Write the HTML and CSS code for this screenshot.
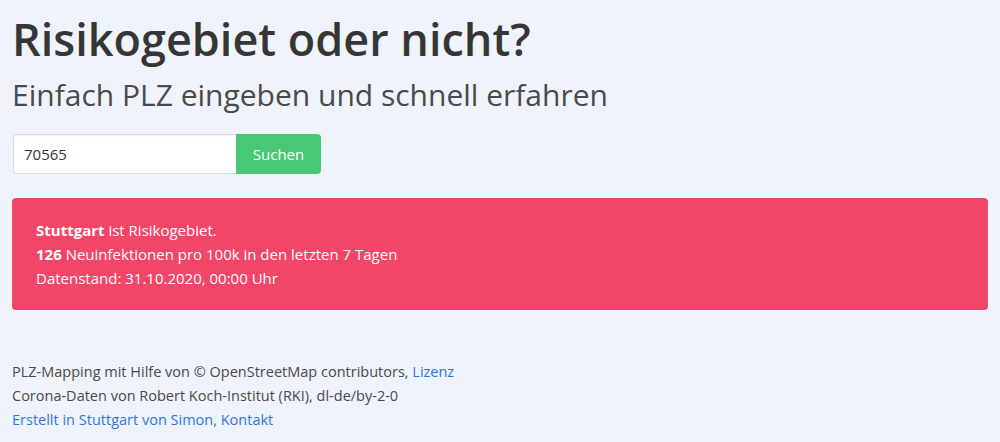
FILE: index.html
```html
<!DOCTYPE html>
<html lang="de">
<head>
<meta charset="utf-8">
<title>Risikogebiet oder nicht?</title>
<link rel="stylesheet" href="styles.css">
</head>
<body>
<main class="page">
  <header class="hero">
    <h1 class="title">Risikogebiet oder nicht?</h1>
    <h2 class="subtitle">Einfach PLZ eingeben und schnell erfahren</h2>
  </header>
  <form class="search">
    <input class="search-input" type="text" value="70565">
    <button class="search-button" type="button">Suchen</button>
  </form>
  <div class="notification">
    <p><strong>Stuttgart</strong> ist Risikogebiet.</p>
    <p><strong>126</strong> Neuinfektionen pro 100k in den letzten 7 Tagen</p>
    <p>Datenstand: 31.10.2020, 00:00 Uhr</p>
  </div>
  <footer class="footer">
    <p>PLZ-Mapping mit Hilfe von © OpenStreetMap contributors, <a href="#">Lizenz</a></p>
    <p>Corona-Daten von Robert Koch-Institut (RKI), dl-de/by-2-0</p>
    <p><a href="#">Erstellt in Stuttgart von Simon, Kontakt</a></p>
  </footer>
</main>
</body>
</html>
```
FILE: styles.css
```css
html, body {
  margin: 0;
  padding: 0;
  background: #eff3fb;
}
body {
  font-family: "Open Sans", "Noto Sans", sans-serif;
  font-size: 15px;
  line-height: 24px;
  color: #4a4a4a;
}
.page {
  padding: 12px 12px 0 12px;
  display: flex;
  flex-direction: column;
}
.hero {
  display: flex;
  flex-direction: column;
}
.title {
  margin: 0;
  font-size: 45px;
  font-weight: 600;
  line-height: 54px;
  color: #363636;
}
.subtitle {
  margin: 9px 0 0 0;
  font-size: 30px;
  font-weight: 400;
  line-height: 40px;
  color: #4a4a4a;
}
.search {
  display: flex;
  margin-top: 19px;
  margin-left: 1px;
}
.search-input {
  box-sizing: border-box;
  width: 223px;
  height: 40px;
  border: 1px solid #dbdbdb;
  border-right: none;
  border-radius: 4px 0 0 4px;
  background: #fff;
  padding: 0 10px;
  font-family: inherit;
  font-size: 15px;
  color: #363636;
  box-shadow: inset 0 1px 2px rgba(10,10,10,0.05);
  outline: none;
}
.search-button {
  box-sizing: border-box;
  width: 85px;
  height: 40px;
  border: none;
  border-radius: 0 4px 4px 0;
  background: #48c774;
  color: #fff;
  font-family: inherit;
  font-size: 15px;
  padding: 0;
}
.notification {
  margin-top: 24px;
  background: #f14668;
  color: #fff;
  border-radius: 4px;
  padding: 20px 40px 20px 24px;
  line-height: 24px;
}
.notification p, .footer p {
  margin: 0;
}
.notification strong {
  font-weight: 700;
}
.footer {
  margin-top: 50px;
  font-size: 14.5px;
  color: #4a4a4a;
}
.footer a {
  color: #3273dc;
  text-decoration: none;
}
```
